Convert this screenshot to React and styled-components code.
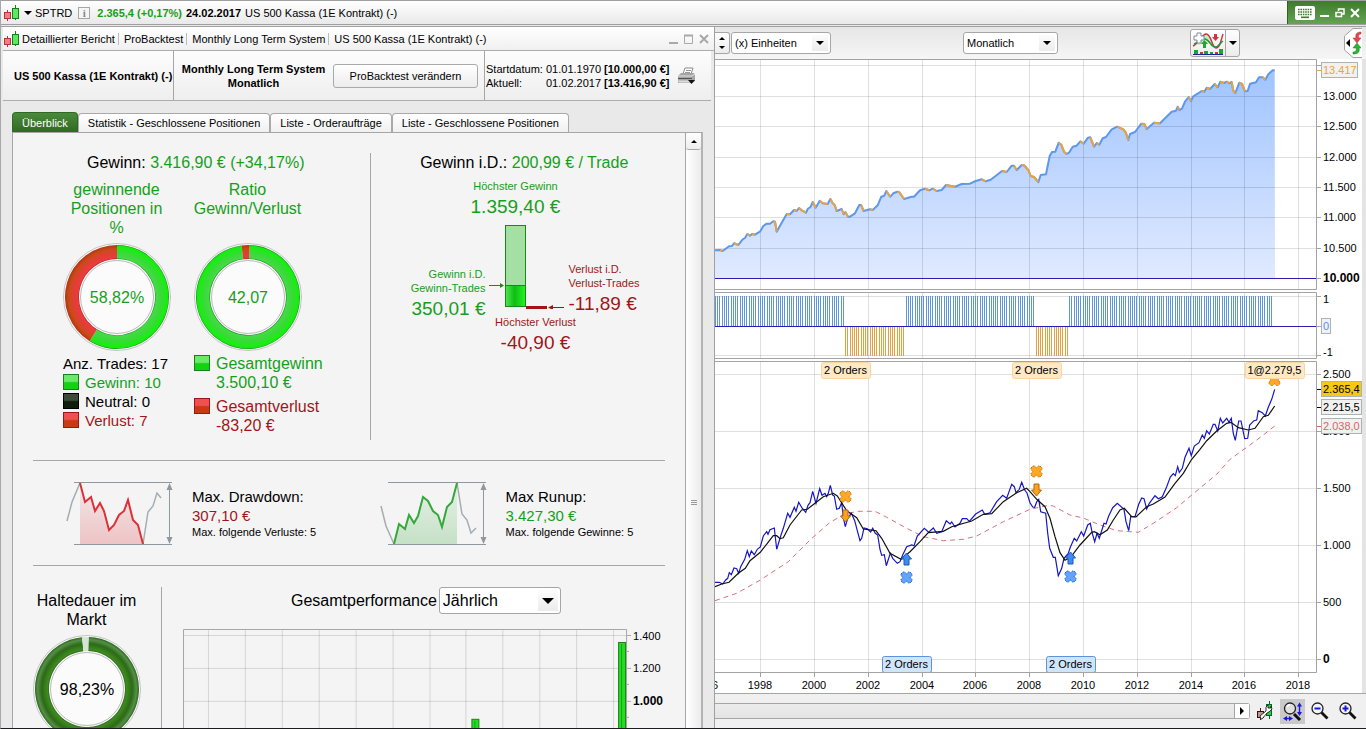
import React from 'react';
import styled, { createGlobalStyle } from 'styled-components';

const GREEN = '#15a01b';
const RED = '#a3141a';

const toPoints = (str) => str.trim().split(/\s+/).map((p) => p.split(',').map(Number));

const equity = `715,250.3 720,250 722.7,251 729,246.3 732,246 734,243.3 738.3,245 742.7,239.3 745,238 747.3,234 750,235.7 752,234
755,234.7 760.3,231.3 763.3,226 766.7,223.7 770,223.7 773.3,221.3 775,221.7 776.7,231.7 781.7,222.7 786.7,214 790,214.3 794,210
796.7,211 799,208 801.7,210.3 806,212.7 807.7,209 810.7,206.7 812.7,202 815.7,207.7 819.7,200.7 822.7,203.3 827.7,204 830.3,199
832.7,203.3 834.7,205 836.7,211 841.7,209 843.7,214.3 845.3,212 848,216.7 850,216.7 855,213.3 859.3,205 861,205 863.7,211
870,209.3 872.7,210 877.7,205.3 881.3,196.7 884.3,195.7 886.3,191 890.3,196.7 893.3,193.3 897.3,191.7 899.3,192.3 904,199
911.7,196.7 914,196.7 920,190.3 925,188.7 929.3,190.3 932.7,188.7 936.7,191 941.7,190 946,185 955,186.7 961.7,184 970,183.7
975.7,181 981.7,179.3 985.7,181.3 990.7,179.7 1002,171 1006.7,172 1011.7,165.7 1014,165.7 1016.7,170 1021.7,165 1024,165.3
1028.3,170 1030.7,176 1034,177 1038.3,182.2 1040.7,175 1046,174.3 1049.7,156 1052,152 1055.3,151.7 1058.7,142.7 1061.3,144.7
1064,151.7 1066.7,154 1069,152.7 1072.7,146.7 1076.7,145.7 1080.3,141.3 1083.7,143.7 1088,137.7 1090.3,137.3 1094,146.7
1096.7,143 1099.3,144.7 1102.7,138.3 1106,137 1111.7,129.3 1117.3,126.7 1123.3,129.3 1125.7,132.3 1128.3,140 1130,134 1135,132
1141.3,123.7 1144.3,124 1146.7,129 1154,122.7 1160,123.3 1171.7,111.7 1176,110.7 1177.7,106.7 1179.3,110 1182,108.7 1185,101.7
1188.7,97 1191,101 1193.3,96.3 1201.7,91 1204.3,91.7 1206.7,87.7 1210,89 1214.7,84 1217.7,87.3 1220.3,81.7 1224,83 1226.7,81.7
1229.3,83.3 1231.7,82 1233.3,90.7 1235.3,93 1239.3,82.7 1242,84 1245,91.3 1247.7,91 1250,83.7 1256,82.3 1259,77.3 1262.7,77.3
1265.3,79.7 1268.3,74.3 1272.7,70.3 1274.7,70.3`;

const price = `715,582.3 719.3,582.3 722.7,584 725.7,580 727.7,578.3 729.3,572.7 731.3,574.7 734,568 736.7,568.7 738.7,573.3
740.7,566.7 744.7,559.3 747.3,550.7 749.3,556.7 751.3,551 754.3,554.7 757.3,549.3 760.3,547 763.3,536 766.7,531.7 768,534.3
770,529.7 774.3,528 776.7,549.3 780.7,536 783.3,528.3 787.7,513.3 790,517.3 794.3,507.3 796,511.3 798.7,502.3 802,508 805.7,512.3
808,505.3 810,502.7 812.7,491.3 816,503.3 819.7,488.7 822,495.3 825,493.3 826.7,496.7 828.3,493.3 830.3,485.3 832.7,495 834.3,496
836.7,509.3 839.3,508.3 841.7,502.7 843.3,517.3 845.3,526.7 847.7,518.3 851.3,513.3 854.7,520.7 857.3,530.7 860,540.7 861.7,538.3
864,528 867.3,528.7 870.7,532 872.7,528.3 875.3,533.3 877.7,535 880,549.3 881.7,555.3 884.3,554.7 886.3,565.7 890.3,553.3
892.7,558.3 897.3,563.3 900,561.7 902.7,555 906.7,546.7 911.7,545 914,545.7 917.3,536 924.3,528.3 928.7,532.3 933.3,528
936.7,533.3 941.7,531.7 946.3,520.7 950,524 951.7,522 955,527 960,523.3 962.3,518.7 966.7,518.7 969.3,521.3 975.7,514 982.3,510
984.7,514.3 990,512.7 996.7,501.7 1002.7,495.3 1006.7,498.3 1011.7,484.3 1014.3,486.7 1016,492.7 1019.3,489.3 1021.7,482.3
1024.7,490 1027,493 1030,502.7 1032.7,507 1034.7,507.3 1036.7,501.7 1038.7,499.3 1040.7,511.7 1045.7,513.3 1047.7,533.3
1049.7,548.3 1053.3,557.3 1055.3,557.3 1058.3,575.7 1061.7,568.3 1064,558.3 1068.3,553.3 1070.3,547.3 1074.3,538.3 1076.7,541
1081.3,531.7 1083.7,536 1087.7,525 1090.3,523.3 1092.3,533.3 1094.7,541.7 1097,533.3 1099.3,538.3 1104,523.3 1106,524 1108.7,516
1112.7,507.7 1117.3,503.3 1124,509.3 1126,521.7 1128.7,530.7 1130.7,516.7 1135,516.7 1138.7,504.3 1141.7,498 1144,498.7
1146.7,509 1149.3,503.3 1155,495.7 1158.3,498.7 1162.3,496.7 1166.7,486.7 1170.3,477 1173.3,473.7 1175.3,475.7 1177.7,466.7
1179.3,472.3 1182.3,468.3 1185,457.3 1189,448.3 1191.3,455.7 1194.3,446 1199,442.7 1202.3,435 1204.3,438.3 1206.7,430.7
1209.3,434 1213.3,424.3 1215,424.3 1217.7,431 1220.3,418.3 1222.7,423 1226.7,418.3 1229,422.3 1231.3,418.3 1233.3,433.3
1235.3,440.3 1238.7,421 1241,421 1244.7,438.7 1247.7,438.3 1249.7,425 1254,420.7 1256.7,420 1258.3,410.7 1262.3,412.7
1265.3,416 1268.3,407.3 1271.7,399.3 1274.7,389.3`;

const fastAverage = `715,586.7 721.7,584 729,582.3 738.3,573.3 745.3,568.3 750,560.7 760.3,552.3 767.3,543.3 773.3,535.7 776.7,535.7
780,538.7 783.3,537.7 790,525 801.7,510 807.3,509.3 815,503.3 823.3,496.7 833.3,493.3 837.3,496 846.7,510.7 856.7,517.7
863.3,529 876,530.7 881.7,538.3 890,553.3 901,559.3 910,551.7 920,541.7 928.3,532.7 943.3,531.3 951.7,526.7 971.7,521
983.3,514.3 991.7,513.7 1003.3,501.7 1016.7,492.7 1026.7,488.3 1030,491.7 1036.7,499.3 1045,506.7 1050,518.3 1055,536.7
1060,552.7 1065,560.3 1070.7,557.3 1080,545 1091.7,532.3 1094.3,531.7 1100,534.7 1107.3,530 1113.3,520 1120,510 1124.3,508.3
1131.7,516.7 1136,517 1146.7,506.7 1153.3,504 1165,497 1175,483.3 1183.3,473.3 1191.7,459.3 1200,449.3 1206.7,440.7
1216.7,431 1226.7,423.3 1231,422.3 1238.3,427.7 1248.3,430 1255,428.3 1263.3,416.7 1268.3,415.3 1274.7,406`;

const slowAverage = `715,600.7 736.7,593.3 760.3,580 788.3,561.7 810,540 830,522.3 843.3,515 856.7,511.3 875,511.3 886.7,517.3
906.7,528.3 923.3,536.7 943.3,540.7 963.3,539.3 976.7,536 1003.3,521.7 1030,509.3 1048.3,505.3 1053.3,506 1070,515
1083.3,518 1100,525 1116.7,530.7 1138.3,532.3 1153.3,523.3 1176.7,507.7 1191.7,495 1216.7,474.3 1230,459.3 1250,445
1263.3,435 1274.7,426`;

const years = [
  [760, 1998], [814, 2000], [868, 2002], [922, 2004], [975, 2006], [1029, 2008],
  [1083, 2010], [1137, 2012], [1191, 2014], [1244, 2016], [1298, 2018]
];

/* ---------- page ---------- */

const GlobalStyle = createGlobalStyle`
  * { box-sizing: border-box; }
  body {
    margin: 0;
    background: #e9e9e9;
    color: #000;
    font-family: "Liberation Sans", Arial, sans-serif;
    font-size: 11px;
    line-height: 14px;
  }
  button, select {
    font: inherit;
    color: inherit;
  }
  svg { display: block; }
`;

const Page = styled.div`
  display: flex;
  flex-direction: column;
  height: 100vh;
  overflow: hidden;
  border-left: 1px solid #a8a8a8;
  border-bottom: 1px solid #1c1c20;
`;

const TitleBar = styled.header`
  display: flex;
  align-items: center;
  height: 25px;
  flex: none;
  padding-left: 3px;
  border-top: 1px solid #a0a0a0;
  border-bottom: 1px solid #a0a0a0;
  background: linear-gradient(#fff, #e9e9e9);
  white-space: nowrap;
`;

const SymbolMenu = styled.button`
  display: flex;
  align-items: center;
  gap: 3px;
  padding: 0;
  border: 0;
  background: none;
`;

const InfoButton = styled.button`
  width: 12px;
  height: 12px;
  margin: 0 7px 0 6px;
  padding: 0;
  border: 1px solid #a6a6a6;
  background: #f6f6f6;
  color: #888;
  font-family: "Liberation Serif", serif;
  font-weight: bold;
  line-height: 10px;
`;

const Quote = styled.strong`
  margin-right: 4px;
  color: ${(props) => props.$color || '#000'};
`;

const WindowControls = styled.div`
  display: flex;
  align-items: center;
  gap: 5px;
  align-self: stretch;
  width: 79px;
  margin-left: auto;
  padding-left: 7px;
  border-left: 1px solid #2f6420;
  background: linear-gradient(#3d7c2d, #63a352);
`;

const IconButton = styled.button`
  display: flex;
  flex: none;
  align-items: center;
  justify-content: center;
  width: ${(props) => props.$width || 12}px;
  height: ${(props) => props.$height || 16}px;
  padding: 0;
  border: 0;
  background: ${(props) => (props.$pressed ? '#c9c9c9' : 'none')};
`;

const Workspace = styled.main`
  display: grid;
  grid-template-columns: minmax(0, 714fr) minmax(0, 651fr);
  flex: 1;
  min-height: 0;
  margin-top: 1px;
  border-top: 1px solid #a0a0a0;
`;

/* ---------- report window ---------- */

const ReportWindow = styled.section`
  display: flex;
  flex-direction: column;
  min-width: 0;
  min-height: 0;
  padding-left: 2px;
  border-right: 1px solid #a0a0a0;
  background: #e9e9e9;
`;

const ReportTitle = styled.div`
  display: flex;
  align-items: center;
  height: 24px;
  flex: none;
  padding: 0 4px 0 1px;
  border-bottom: 1px solid #adadad;
  background: linear-gradient(#fff, #f0f0f0);
  white-space: nowrap;
`;

const Crumb = styled.span`
  margin-left: ${(props) => (props.$first ? 1 : 5)}px;
  padding-right: ${(props) => (props.$last ? 0 : 3)}px;
  border-right: ${(props) => (props.$last ? 'none' : '1px solid #bbb')};
  line-height: 12px;
`;

const MiniControls = styled.div`
  display: flex;
  gap: 3px;
  margin-left: auto;
`;

const Summary = styled.div`
  display: grid;
  grid-template-columns: minmax(0, 171fr) minmax(0, 311fr) minmax(0, 226fr);
  height: 50px;
  flex: none;
  margin-right: 3px;
  border-bottom: 1px solid #adadad;
  background: linear-gradient(#fdfdfd, #eee);
  white-space: nowrap;
`;

const SummaryCell = styled.div`
  display: flex;
  align-items: center;
  padding-left: ${(props) => props.$pad}px;
  border-right: ${(props) => (props.$last ? 'none' : '1px solid #a6a6a6')};
  font-weight: ${(props) => (props.$bold ? 'bold' : 'normal')};
`;

const SystemName = styled.div`
  flex: 1;
  font-weight: bold;
  text-align: center;
`;

const ChangeButton = styled.button`
  width: 145px;
  height: 24px;
  margin-right: 6px;
  border: 1px solid #a9a9a9;
  border-radius: 3px;
  background: linear-gradient(#fff, #ececec);
`;

const Dates = styled.dl`
  display: grid;
  grid-template-columns: 60px 58px auto;
  margin: 0 8px 0 0;

  dd { margin: 0; }
`;

const Tabs = styled.div`
  display: flex;
  align-items: flex-end;
  height: 31px;
  flex: none;
  padding-left: 9px;
`;

const Tab = styled.button`
  height: ${(props) => (props.$active ? 20 : 19)}px;
  padding: 0 9px;
  border: 1px solid ${(props) => (props.$active ? '#2f6a22' : '#a9a9a9')};
  border-bottom: 0;
  border-radius: 4px 4px 0 0;
  background: ${(props) => (props.$active ? 'linear-gradient(#4b8a3b, #2f6a22)' : 'linear-gradient(#fff, #f0f0f0)')};
  color: ${(props) => (props.$active ? '#fff' : '#000')};
  white-space: nowrap;
`;

const ReportBody = styled.div`
  display: flex;
  flex: 1;
  min-height: 0;
  margin: 0 11px 0 9px;
  border: 1px solid #a6a6a6;
  border-bottom: 0;
  border-right: 2px solid #b3b3b3;
  background: #f4f4f4;
  overflow: hidden;
`;

const ReportContent = styled.div`
  flex: 1;
  min-width: 0;
  padding: 0 20px;
  font-size: 16px;
  line-height: 19px;
`;

const Scroller = styled.div`
  display: flex;
  flex-direction: column;
  width: 16px;
  flex: none;
  border-left: 1px solid #a6a6a6;
`;

const ScrollUp = styled.button`
  height: 17px;
  padding: 0;
  border: 0;
  border-bottom: 1px solid #a6a6a6;
  border-radius: 3px;
  background: linear-gradient(#fff, #eee);
  display: flex;
  align-items: center;
  justify-content: center;
`;

const ScrollThumb = styled.div`
  display: flex;
  align-items: center;
  justify-content: center;
  flex: 1;
  padding-top: 128px;
  background: linear-gradient(90deg, #fff, #ececec);
`;

const Overview = styled.section`
  display: grid;
  grid-template-columns: minmax(0, 339fr) minmax(0, 294fr);
  padding: 20px 0;
  border-bottom: 1px solid #a6a6a6;
`;

const Performance = styled.div`
  height: 287px;
  border-right: 1px solid #a6a6a6;
`;

const Headline = styled.h2`
  margin: 0;
  font-size: 16px;
  font-weight: normal;
  text-align: center;
  padding-left: ${(props) => props.$shift || 0}px;
  padding-right: ${(props) => props.$trim || 0}px;
`;

const Value = styled.span`
  color: ${(props) => props.$color};
`;

const Rings = styled.div`
  display: grid;
  grid-template-columns: 131px 131px;
  margin: 8px 0 0 18px;
`;

const RingColumn = styled.div`
  display: flex;
  flex-direction: column;
  align-items: center;
`;

const RingTitle = styled.h3`
  width: 108px;
  height: 57px;
  margin: 0 0 6px;
  color: ${(props) => props.$color || '#000'};
  font-size: 16px;
  font-weight: normal;
  text-align: center;
`;

const Legend = styled.ul`
  align-self: stretch;
  margin: 3px 0 0 12px;
  padding: 0;
  list-style: none;
  font-size: ${(props) => props.$size || 16}px;
  white-space: nowrap;
`;

const LegendItem = styled.li`
  display: flex;
  gap: 6px;
  margin-bottom: ${(props) => props.$gap || 0}px;
  color: ${(props) => props.$color || '#000'};
`;

const swatches = {
  green: ['#6be96b', '#12d312', '#1b7d1b'],
  black: ['#3c4a38', '#101f0c', '#000'],
  red: ['#f05050', '#c83a10', '#a3141a']
};

const Swatch = styled.i`
  width: 16px;
  height: 16px;
  flex: none;
  margin-top: 1px;
  border: 1px solid ${(props) => swatches[props.$tone][2]};
  background: linear-gradient(${(props) => swatches[props.$tone][0]} 45%, ${(props) => swatches[props.$tone][1]} 55%);
`;

const TradeFigures = styled.div`
  display: grid;
  grid-template-columns: 116px 78px auto;
  margin-top: 7px;
  white-space: nowrap;
`;

const Figure = styled.div`
  display: flex;
  flex-direction: column;
  align-items: ${(props) => props.$align || 'center'};
  width: ${(props) => (props.$width ? props.$width + 'px' : 'auto')};
  padding-top: ${(props) => props.$top || 0}px;
  padding-right: ${(props) => props.$right || 0}px;
  padding-bottom: ${(props) => props.$bottom || 0}px;
  padding-left: ${(props) => props.$left || 0}px;
  margin-left: ${(props) => (props.$push ? 'auto' : 0)};
  color: ${(props) => props.$color};
  font-size: 11px;
  line-height: 14px;
  text-align: right;

  strong {
    font-size: 19px;
    font-weight: normal;
    line-height: 28px;
  }
`;

const Extremes = styled.section`
  display: grid;
  grid-template-columns: 1fr 1fr;
  height: 105px;
  padding: 0 5px 0 0;
  border-bottom: 1px solid #a6a6a6;
`;

const Extreme = styled.div`
  display: flex;
  align-items: center;
  gap: 18px;
  padding: 2px 0 0 33px;
  font-size: 15px;
  white-space: nowrap;

  p { margin: 0; }
  small {
    display: block;
    padding-bottom: 2px;
    font-size: 11px;
    line-height: 14px;
  }
`;

const Yearly = styled.section`
  display: flex;
  padding-top: 21px;
`;

const HoldTime = styled.div`
  display: flex;
  flex-direction: column;
  align-items: center;
  width: 129px;
  flex: none;
  padding: 4px 21px 100px 0;
  border-right: 1px solid #a6a6a6;

  h3 { height: 38px; }
`;

const YearlyChart = styled.div`
  flex: 1;
  min-width: 0;
  padding-left: 21px;
`;

const ChartHead = styled.div`
  display: flex;
  align-items: center;
  gap: 2px;
  margin: 0 0 15px 108px;
`;

const SelectBox = styled.div`
  position: relative;
  flex: none;
  width: ${(props) => props.$width}px;
  height: ${(props) => props.$height}px;

  select {
    appearance: none;
    width: 100%;
    height: 100%;
    padding: 0 0 0 3px;
    border: 1px solid #a6a6a6;
    border-radius: 3px;
    background: #fff;
  }
`;

const SelectArrow = styled.span`
  position: absolute;
  top: 3px;
  right: 3px;
  bottom: 3px;
  display: flex;
  align-items: center;
  justify-content: center;
  width: ${(props) => props.$width || 16}px;
  background: linear-gradient(#fcfcfc, #ececec);
  pointer-events: none;
`;

/* ---------- chart side ---------- */

const ChartPane = styled.section`
  display: flex;
  flex-direction: column;
  min-width: 0;
  min-height: 0;
`;

const ChartToolbar = styled.div`
  display: flex;
  align-items: center;
  height: 32px;
  flex: none;
  padding-right: 4px;
  background: linear-gradient(#e6e6e6, #f6f6f6);
`;

const Gap = styled.div`
  flex: ${(props) => props.$grow};
`;

const Spinner = styled.div`
  display: flex;
  flex-direction: column;
  align-items: center;
  justify-content: center;
  width: 15px;
  height: 22px;
  margin-right: 1px;
  border: 1px solid #a6a6a6;
  border-left: 0;
  border-radius: 0 3px 3px 0;
  background: linear-gradient(#fff, #ececec);
`;

const IndicatorButtons = styled.div`
  display: flex;
  width: 50px;
  height: 28px;
  border: 1px solid #a6a6a6;
  border-radius: 3px;
  background: linear-gradient(#fff, #ececec);

  button + button {
    border-left: 1px solid #a6a6a6;
  }
`;

const SideTab = styled.button`
  width: 18px;
  height: 30px;
  padding: 0;
  border: 0;
  background: none;
`;

const Charts = styled.div`
  flex: 1;
  min-height: 0;
  border-right: 4px solid #e4e4e4;
  background: #fff;
  overflow: hidden;

  svg {
    width: 100%;
    height: auto;
  }
  text {
    font-size: 11px;
  }
`;

const BottomBar = styled.div`
  display: flex;
  align-items: center;
  height: 35px;
  flex: none;
  padding-right: 9px;
  border-top: 1px solid #a6a6a6;
  background: #f0f0f0;
`;

const TimeScroll = styled.div`
  display: flex;
  justify-content: flex-end;
  flex: 1;
  height: 16px;
  margin-right: 5px;
  border: 1px solid #a6a6a6;
  border-left: 0;
  border-radius: 0 3px 3px 0;
  background: linear-gradient(#ececec, #e4e4e4);
`;

const TimeScrollButton = styled.button`
  display: flex;
  align-items: center;
  justify-content: center;
  width: 15px;
  padding: 0;
  border: 0;
  border-left: 1px solid #a6a6a6;
  background: #fff;
`;

/* ---------- drawings ---------- */

function Triangle({ size = 8, dir = 'down' }) {
  const shapes = { down: '0,0 8,0 4,4', up: '0,4 8,4 4,0', right: '0,0 4,4 0,8' };
  const tall = dir === 'right';
  return (
    <svg
      width={tall ? size / 2 : size}
      height={tall ? size : size / 2}
      viewBox={tall ? '0 0 4 8' : '0 0 8 4'}
    >
      <polygon points={shapes[dir]} />
    </svg>
  );
}

function Candles() {
  return (
    <svg width="17" height="18" viewBox="0 0 17 18">
      <path d="M3.5 6v11" stroke="#b2343c" />
      <rect x="0.5" y="8.5" width="6" height="6" fill="#ee7f83" stroke="#b2343c" />
      <path d="M11.5 1v15" stroke="#14801c" />
      <rect x="8.5" y="4.5" width="6" height="10" fill="#5ce860" stroke="#14801c" />
    </svg>
  );
}

function Keyboard() {
  return (
    <svg width="20" height="14" viewBox="0 0 20 14">
      <rect width="20" height="14" rx="2" fill="#fff" />
      <path d="M3 3.5h14M3 6h14M3 8.5h14" stroke="#3c7a2c" strokeWidth="1.4" strokeDasharray="1.6 0.8" />
      <path d="M6 11.3h8" stroke="#3c7a2c" strokeWidth="1.6" />
    </svg>
  );
}

function Printer() {
  return (
    <svg width="20" height="18" viewBox="0 0 20 18">
      <path d="M6 7L8 1h8l-2 6z" fill="#fff" stroke="#8b8b8b" />
      <path d="M9 3.5h5M8 5.5h5" stroke="#999" />
      <path d="M1 9l3-3h13l1 2v6l-3 2H1z" fill="#a5a5a5" />
      <path d="M1 9h14l3-2" stroke="#e2e2e2" fill="none" />
      <path d="M1 11.5h14" stroke="#555" />
      <path d="M1 13.5h13v2H2z" fill="#ddd" />
      <path d="M11 13h7l-3.5 4z" fill="#111" />
    </svg>
  );
}

function arc(cx, cy, r, from, to) {
  const at = (share) => {
    const a = share * Math.PI * 2 - Math.PI / 2;
    return `${cx + r * Math.cos(a)} ${cy + r * Math.sin(a)}`;
  };
  return `M${at(from)}A${r} ${r} 0 ${to - from > 0.5 ? 1 : 0} 1 ${at(to)}`;
}

function Ring({ id, label, color, parts, stops }) {
  return (
    <svg width="108" height="108" viewBox="0 0 108 108">
      <defs>
        {stops.map((list, i) => (
          <radialGradient key={i} id={`${id}${i}`} gradientUnits="userSpaceOnUse" cx="54" cy="54" r="52">
            {list.map(([at, c]) => <stop key={at} offset={at} stopColor={c} />)}
          </radialGradient>
        ))}
      </defs>
      <circle cx="54" cy="54" r="53.5" fill="#fafafa" stroke="#b4b4b4" strokeWidth="0.8" />
      {parts.map(([from, to, fill]) => (
        <path key={from} d={arc(54, 54, 45, from, to)} fill="none" stroke={fill < 0 ? '#d5e5d5' : `url(#${id}${fill})`} strokeWidth="14" />
      ))}
      <circle cx="54" cy="54" r="36.5" fill="#fbfbfb" stroke="#aaa" strokeWidth="0.8" />
      <text x="54" y="60" textAnchor="middle" fontSize="16" fill={color}>{label}</text>
    </svg>
  );
}

const greenStops = [[0.73, '#128a18'], [0.75, '#44dc44'], [0.84, '#3cd83c'], [0.95, '#18ee12'], [0.98, '#18e812'], [1, '#128a18']];
const redStops = [[0.73, '#b02020'], [0.75, '#ea3c3c'], [0.83, '#e43c38'], [0.92, '#c94c18'], [1, '#b83414']];
const holdStops = [[0.73, '#2b6a1c'], [0.76, '#3f8a22'], [0.8, '#38801a'], [0.87, '#2c6a18'], [0.95, '#568f48'], [1, '#2b6a1c']];

function TradeBars() {
  return (
    <svg width="78" height="84" viewBox="0 0 78 84">
      <defs>
        <linearGradient id="gain">
          <stop offset="0" stopColor="#4fe74f" />
          <stop offset="0.45" stopColor="#0fbd14" />
          <stop offset="1" stopColor="#22f51f" />
        </linearGradient>
      </defs>
      <rect x="18.5" y="0.5" width="20" height="81" fill="#a4dfa4" stroke="#18881c" />
      <rect x="18.5" y="60.5" width="20" height="21" fill="url(#gain)" stroke="#18881c" />
      <path d="M2 60.5h12" stroke="#18881c" />
      <path d="M13 58l4 2.5-4 2.5z" fill="#18881c" />
      <path d="M39 82.5h21" stroke={RED} strokeWidth="3" />
      <path d="M65 82.5h12" stroke={RED} />
      <path d="M66 80l-5 2.5 5 2.5z" fill={RED} />
    </svg>
  );
}

function ExtremeSketch({ id, color, area, before, after }) {
  return (
    <svg width="108" height="64" viewBox="0 0 108 64">
      <defs>
        <linearGradient id={id} x1="0" y1="0" x2="0" y2="1">
          <stop offset="0" stopColor={color} stopOpacity="0.06" />
          <stop offset="1" stopColor={color} stopOpacity="0.25" />
        </linearGradient>
      </defs>
      <polygon points={area.fill} fill={`url(#${id})`} />
      <polyline points={before} fill="none" stroke="#a5adb2" strokeWidth="1.5" />
      <polyline points={after} fill="none" stroke="#a5adb2" strokeWidth="1.5" />
      <path d="M8 0.5h98M8 62.5h98M103.5 3v57" stroke="#8f989e" />
      <path d="M103.5 1l3 7h-6zM103.5 62l3-7h-6z" fill="#8f989e" />
      <polyline points={area.line} fill="none" stroke={color} strokeWidth="2" />
    </svg>
  );
}

const drawdownLine = '14,1 19,20 25,15 29,29 34,21 38,29 43,48 48,43 53,33 58,29 62,18 67,38 72,43 77,62';
const runupLine = '14,62 19,42 25,47 29,33 34,41 38,34 43,15 48,19 53,29 58,33 62,45 67,25 72,20 77,1';

function YearlyBars() {
  const columns = [208, 245, 282, 319, 356, 393, 430, 466, 503, 540, 577, 614];
  return (
    <svg width="100%" viewBox="183 629 483 160">
      <g stroke="#000" strokeOpacity="0.13">
        {columns.map((x) => <path key={x} d={`M${x + 0.5} 629v160`} />)}
        {[635, 668, 701].map((y) => <path key={y} d={`M183 ${y + 0.5}h444`} />)}
      </g>
      <path d="M183.5 789V629.5H627.5V789" fill="none" stroke="#a6a6a6" />
      {[635, 668, 701].map((y) => <path key={y} d={`M628 ${y + 0.5}h4M628 ${y + 16.5}h2`} stroke="#a6a6a6" />)}
      {[[619, 642], [472, 719]].map(([x, y]) => (
        <g key={x}>
          <rect x={x + 0.5} y={y + 0.5} width="7" height="160" fill="#22dd20" stroke="#1d7f1d" />
          <path d={`M${x + 3.5} ${y + 2}v150`} stroke="#12a812" />
        </g>
      ))}
      <g fontSize="11">
        <text x="634" y="640">1.400</text>
        <text x="634" y="672">1.200</text>
        <text x="634" y="705" fontSize="12" fontWeight="bold">1.000</text>
      </g>
    </svg>
  );
}

function Grid({ top, bottom, rows }) {
  return (
    <g stroke="#000" strokeOpacity="0.12">
      {years.map(([x]) => <path key={x} d={`M${x + 0.5} ${top}V${bottom}`} />)}
      {rows.map((y) => <path key={y} d={`M715 ${y + 0.5}H1316`} />)}
    </g>
  );
}

function Frame({ top, bottom }) {
  return <path d={`M715 ${top + 0.5}H1316.5V${bottom + 0.5}H715`} fill="none" stroke="#a3a3a3" />;
}

function AxisTag({ y, width = 40, fill = '#f1f1f1', color = '#000', label }) {
  return (
    <g>
      <path d={`M1317 ${y + 8.5}h4`} stroke={color} />
      <rect x="1321.5" y={y + 0.5} width={width} height="15" fill={fill} stroke="#adb3b3" />
      <text x="1323" y={y + 12} fill={color}>{label}</text>
    </g>
  );
}

function EquityChart() {
  const pts = toPoints(equity);
  // stretches where the equity falls are drawn over in orange
  const losses = pts
    .slice(1)
    .map((p, i) => [pts[i], p])
    .filter(([a, b]) => b[1] > a[1])
    .map(([a, b]) => `M${a}L${b}`)
    .join('');
  const labels = [['13.000', 96], ['12.500', 126], ['12.000', 157], ['11.500', 187], ['11.000', 217], ['10.500', 248]];
  return (
    <svg viewBox="715 59 647 231" role="img" aria-label="Equity">
      <defs>
        <linearGradient id="equity" x1="0" y1="0" x2="0" y2="1">
          <stop offset="0" stopColor="#a0c4ff" />
          <stop offset="1" stopColor="#e0eaff" />
        </linearGradient>
      </defs>
      <polygon points={`${equity} 1275,278 715,278`} fill="url(#equity)" />
      <Grid top={60} bottom={289} rows={[65, 96, 126, 157, 187, 217, 248]} />
      <polyline points={equity} fill="none" stroke="#5f97ee" strokeWidth="2" strokeLinejoin="round" />
      <path d={losses} stroke="#eda23a" strokeWidth="2" />
      <path d="M715 278.5H1316" stroke="#2a1fb0" />
      <Frame top={59} bottom={289} />
      <path d="M1317 65.5h4M1317 278.5h4" stroke="#a3a3a3" />
      {labels.map(([text, y]) => (
        <g key={text}>
          <path d={`M1317 ${y + 0.5}h4`} stroke="#a3a3a3" />
          <text x="1323" y={y + 4}>{text}</text>
        </g>
      ))}
      <text x="1323" y="282" style={{ fontSize: 12, fontWeight: 'bold' }}>10.000</text>
      <AxisTag y={62} width={36} color="#eda23a" label="13.417" />
    </svg>
  );
}

function PositionChart() {
  const bars = [];
  for (let i = 0; i < 249; i++) {
    const x = Math.round(1271 - i * 2.242);
    if (x < 715) break;
    const short = (x > 844 && x < 906) || (x > 1035 && x < 1069);
    bars.push(<rect key={x} x={x} y={short ? 327 : 296} width="1" height={short ? 29 : 30} fill={short ? '#e3a03c' : '#5c95da'} />);
  }
  return (
    <svg viewBox="715 290 647 70" role="img" aria-label="Position">
      <Grid top={292} bottom={358} rows={[296, 355]} />
      {bars}
      <path d="M715 326.5H1316" stroke="#2a1fb0" />
      <Frame top={292} bottom={358} />
      <path d="M1317 296.5h4M1317 326.5h4M1317 355.5h4" stroke="#a3a3a3" />
      <text x="1323" y="303">1</text>
      <text x="1323" y="356">-1</text>
      <rect x="1321.5" y="318.5" width="9" height="15" fill="#eef2f6" stroke="#adb3b3" />
      <text x="1323" y="330" fill="#5f8fdc">0</text>
    </svg>
  );
}

function Cross({ x, y, sell }) {
  return (
    <path
      transform={`translate(${x} ${y})`}
      d="M-5.5-3.5L-3.5-5.5H-2L0-3.7L2-5.5H3.5L5.5-3.5V-2L3.7 0L5.5 2V3.5L3.5 5.5H2L0 3.7L-2 5.5H-3.5L-5.5 3.5V2L-3.7 0L-5.5-2z"
      fill={sell ? '#ffa824' : '#62a4ff'}
      stroke={sell ? '#b87410' : '#2462c4'}
      strokeDasharray="1.5 0.7"
    />
  );
}

function TradeArrow({ x, y, sell }) {
  return (
    <path
      transform={`translate(${x} ${y}) scale(1 ${sell ? 1 : -1})`}
      d="M-2.5-6h5V0H5L0 6L-5 0h2.5z"
      fill={sell ? '#ffa020' : '#3f8cf0'}
      stroke={sell ? '#b06a08' : '#1c58b4'}
    />
  );
}

function OrderTag({ x, y, width, label, buy }) {
  return (
    <g>
      <rect x={x + 0.5} y={y + 0.5} width={width} height="16" rx="2" fill={buy ? '#cfe5fb' : '#ffe8c4'} stroke={buy ? '#5c94dc' : '#f8d6a4'} />
      <text x={x + width / 2} y={y + 12} textAnchor="middle">{label}</text>
    </g>
  );
}

function PriceChart() {
  const labels = [['2.500', 374], ['2.000', 431], ['1.500', 488], ['1.000', 545], ['500', 602]];
  return (
    <svg viewBox="715 360 647 333" role="img" aria-label="US 500 Kassa">
      <Grid top={362} bottom={672} rows={[374, 431, 488, 545, 602, 659]} />
      <polyline points={slowAverage} fill="none" stroke="#d8707c" strokeDasharray="5 4" />
      <polyline points={price} fill="none" stroke="#1616c4" strokeWidth="1.2" />
      <polyline points={fastAverage} fill="none" stroke="#111" strokeWidth="1.2" />
      <Cross x={845.5} y={496.5} sell />
      <TradeArrow x={845.5} y={516} sell />
      <Cross x={1036.5} y={471.5} sell />
      <TradeArrow x={1036.5} y={490} sell />
      <Cross x={1274.5} y={380} sell />
      <TradeArrow x={906.5} y={559} />
      <Cross x={906.5} y={577.5} />
      <TradeArrow x={1070.5} y={558} />
      <Cross x={1070.5} y={576.5} />
      <OrderTag x={821} y={362} width={49} label="2 Orders" />
      <OrderTag x={1012} y={362} width={49} label="2 Orders" />
      <OrderTag x={1245} y={362} width={59} label="1@2.279,5" />
      <OrderTag x={882} y={656} width={49} label="2 Orders" buy />
      <OrderTag x={1046} y={656} width={49} label="2 Orders" buy />
      <rect x="715" y="673" width="601" height="2" fill="#fff" />
      <Frame top={361} bottom={672} />
      {labels.map(([text, y]) => (
        <g key={text}>
          <path d={`M1317 ${y + 0.5}h4`} stroke="#a3a3a3" />
          <text x="1323" y={y + 4}>{text}</text>
        </g>
      ))}
      <path d="M1317 659.5h4" stroke="#a3a3a3" />
      <text x="1323" y="663" style={{ fontSize: 12, fontWeight: 'bold' }}>0</text>
      <AxisTag y={381} fill="#f6c914" label="2.365,4" />
      <AxisTag y={399} label="2.215,5" />
      <AxisTag y={418} color="#dc6464" label="2.038,0" />
      <text x="712" y="689">6</text>
      {years.map(([x, year]) => (
        <g key={year}>
          <path d={`M${x + 0.5} 673v4`} stroke="#a3a3a3" />
          <text x={x} y="689" textAnchor="middle">{year}</text>
        </g>
      ))}
    </svg>
  );
}

function IndicatorIcon() {
  return (
    <svg width="34" height="26" viewBox="0 0 34 26">
      <path d="M12 6c5-5 9 3 11 10-4-1-8-4-11-10zM3 14c3-5 6-6 9-8 2 4 0 7-3 9z" fill="#c6eac2" />
      <path d="M2 16C8 13 10 5 15 4S21 18 25 18s5-8 7-14" fill="none" stroke="#c8323c" strokeWidth="1.4" />
      <path d="M3 14c5-2 6-6 11-5s6 8 10 8 5-4 8-6" fill="none" stroke="#1f9a32" strokeWidth="1.4" />
      <path d="M6 3h4v3h3v4h-3v3H6v-3H3V6h3z" fill="#fff" stroke="#7c8a99" />
      <path d="M23 4h3v3h2l-3.500 4L21 7h2z" fill="#d8323c" />
      <path d="M12 18v-4h-2l3.500-4 3.500 4h-2v4z" fill="#1fa82c" />
      <path d="M2 24.500h30" stroke="#20209a" />
      <path d="M3 20h4v4H3zM13 21h4v3h-4zM19 22h3v2h-3zM28 19h4v5h-4z" fill="#18a828" />
      <path d="M9 22h3v2H9zM24 22h3v2h-3z" fill="#c8323c" />
    </svg>
  );
}

function SideTabIcon() {
  return (
    <svg width="18" height="30" viewBox="0 0 18 30">
      <path d="M18 0.500H9L0.500 8v14L9 29.500h9" fill="#fff" stroke="#a3a3a3" />
      <path d="M6 11l-4 4 4 4z" />
      <path d="M17 4c-4 0-6 2-5 6H9l4 5 4-5h-2c-1-3 0-4 2-4z" fill="#e04850" stroke="#b83038" strokeWidth="0.500" />
      <path d="M9 26c5 0 7-2 6-6h2l-4-5-4 5h3c1 3-1 4-3 4z" fill="#28b82c" stroke="#157f1a" strokeWidth="0.500" />
    </svg>
  );
}

function CandleSettingsIcon() {
  return (
    <svg width="16" height="20" viewBox="0 0 16 20">
      <path d="M3.500 7v12" stroke="#612" />
      <rect x="0.500" y="10.500" width="6" height="6" fill="#b98" stroke="#311" />
      <path d="M12.500 0v18" stroke="#063" />
      <rect x="9.500" y="3.500" width="5" height="11" fill="#2ecc40" stroke="#063" />
      <path d="M4 18L3 15l6-5V6l2-2v3h3V5l1 3-3 3-2 1-5 6z" fill="#fff" stroke="#222" strokeWidth="0.900" />
    </svg>
  );
}

function ZoomIcon({ sign, fit }) {
  if (fit) {
    return (
      <svg width="25" height="25" viewBox="0 0 25 25">
        <path d="M14 15l6 6" stroke="#111" strokeWidth="3" />
        <circle cx="10" cy="9.500" r="5.500" fill="#e0e0e0" stroke="#222" strokeWidth="1.300" />
        <path d="M7 8a4 4 0 0 1 3-2.500" fill="none" stroke="#fff" strokeWidth="1.500" />
        <path d="M19.500 6v9M5 19.500h6" stroke="#1818d8" strokeWidth="1.400" />
        <path d="M19.500 3.500l2.500 4h-5zM19.500 17l2.500-4h-5zM3 19.500l4-2.500v5zM13 19.500l-4-2.500v5z" fill="#1818d8" />
      </svg>
    );
  }
  return (
    <svg width="18" height="18" viewBox="0 0 18 18">
      <path d="M10 10l6.500 6.500" stroke="#111" strokeWidth="2.800" />
      <circle cx="6.500" cy="6.500" r="5.500" fill="#f4f4ff" stroke="#222" strokeWidth="1.300" />
      <path d={sign === 'plus' ? 'M3.500 6.500h6M6.500 3.500v6' : 'M3.500 6.500h6'} stroke="#1818d8" strokeWidth="2" />
    </svg>
  );
}

/* ---------- sections ---------- */

function Report() {
  return (
    <ReportWindow>
      <ReportTitle>
        <Candles />
        <Crumb $first>Detaillierter Bericht</Crumb>
        <Crumb>ProBacktest</Crumb>
        <Crumb>Monthly Long Term System</Crumb>
        <Crumb $last>US 500 Kassa (1E Kontrakt) (-)</Crumb>
        <MiniControls>
          <IconButton aria-label="Minimieren">
            <svg width="10" height="10"><path d="M0 9h9" stroke="#a9a9a9" strokeWidth="2" /></svg>
          </IconButton>
          <IconButton aria-label="Maximieren">
            <svg width="10" height="10"><path d="M0.500 1.500h8v8h-8z" fill="none" stroke="#a9a9a9" /><path d="M0 1.500h9" stroke="#a9a9a9" strokeWidth="2" /></svg>
          </IconButton>
          <IconButton aria-label="Bericht schließen">
            <svg width="10" height="10"><path d="M1 1l8 8M9 1l-8 8" stroke="#a9a9a9" strokeWidth="2" /></svg>
          </IconButton>
        </MiniControls>
      </ReportTitle>

      <Summary>
        <SummaryCell $pad={11} $bold>US 500 Kassa (1E Kontrakt) (-)</SummaryCell>
        <SummaryCell $pad={0}>
          <SystemName>Monthly Long Term System<br />Monatlich</SystemName>
          <ChangeButton>ProBacktest verändern</ChangeButton>
        </SummaryCell>
        <SummaryCell $pad={1} $last>
          <Dates>
            <dt>Startdatum:</dt>
            <dd>01.01.1970</dd>
            <dd><b>[10.000,00 €]</b></dd>
            <dt>Aktuell:</dt>
            <dd>01.02.2017</dd>
            <dd><b>[13.416,90 €]</b></dd>
          </Dates>
          <IconButton $width={20} $height={18} aria-label="Drucken"><Printer /></IconButton>
        </SummaryCell>
      </Summary>

      <Tabs role="tablist">
        <Tab role="tab" aria-selected="true" $active>Überblick</Tab>
        <Tab role="tab">Statistik - Geschlossene Positionen</Tab>
        <Tab role="tab">Liste - Orderaufträge</Tab>
        <Tab role="tab">Liste - Geschlossene Positionen</Tab>
      </Tabs>

      <ReportBody>
        <ReportContent>
          <Overview>
            <Performance>
              <Headline $trim={12}>Gewinn: <Value $color={GREEN}>3.416,90 € (+34,17%)</Value></Headline>
              <Rings>
                <RingColumn>
                  <RingTitle $color={GREEN}>gewinnende Positionen in %</RingTitle>
                  <Ring
                    id="wins"
                    label="58,82%"
                    color={GREEN}
                    stops={[greenStops, redStops]}
                    parts={[[0, 0.5882, 0], [0.5882, 1, 1]]}
                  />
                  <Legend $size={15}>
                    <LegendItem>Anz. Trades: 17</LegendItem>
                    <LegendItem $color={GREEN}><Swatch $tone="green" />Gewinn: 10</LegendItem>
                    <LegendItem><Swatch $tone="black" />Neutral: 0</LegendItem>
                    <LegendItem $color={RED}><Swatch $tone="red" />Verlust: 7</LegendItem>
                  </Legend>
                </RingColumn>
                <RingColumn>
                  <RingTitle $color={GREEN}>Ratio Gewinn/Verlust</RingTitle>
                  <Ring
                    id="ratio"
                    label="42,07"
                    color={GREEN}
                    stops={[greenStops, redStops]}
                    parts={[[0.005, 0.98, 0], [0.98, 1.005, 1]]}
                  />
                  <Legend>
                    <LegendItem $color={GREEN} $gap={5}><Swatch $tone="green" /><span>Gesamtgewinn<br />3.500,10 €</span></LegendItem>
                    <LegendItem $color={RED}><Swatch $tone="red" /><span>Gesamtverlust<br />-83,20 €</span></LegendItem>
                  </Legend>
                </RingColumn>
              </Rings>
            </Performance>

            <div>
              <Headline $shift={12}>Gewinn i.D.: <Value $color={GREEN}>200,99 € / Trade</Value></Headline>
              <TradeFigures>
                <Figure $color={GREEN} $align="flex-end" $top={88} $right={2}>
                  <span>Gewinn i.D.</span>
                  <span>Gewinn-Trades</span>
                  <strong>350,01 €</strong>
                </Figure>
                <div>
                  <Figure $color={GREEN} $width={56} $bottom={4}>
                    Höchster Gewinn
                    <strong>1.359,40 €</strong>
                  </Figure>
                  <TradeBars />
                  <Figure $color={RED} $width={60} $push $top={6}>
                    Höchster Verlust
                    <strong>-40,90 €</strong>
                  </Figure>
                </div>
                <Figure $color={RED} $align="flex-start" $top={83} $left={3}>
                  <span>Verlust i.D.</span>
                  <span>Verlust-Trades</span>
                  <strong>-11,89 €</strong>
                </Figure>
              </TradeFigures>
            </div>
          </Overview>

          <Extremes>
            <Extreme>
              <ExtremeSketch
                id="drawdown"
                color="#dc3138"
                before="1,39 6,20 14,1"
                after="77,62 82,30 87,24 91,11 95,16"
                area={{ line: drawdownLine, fill: `${drawdownLine} 14,62` }}
              />
              <div>
                <p>Max. Drawdown:</p>
                <p><Value $color={RED}>307,10 €</Value></p>
                <small>Max. folgende Verluste: 5</small>
              </div>
            </Extreme>
            <Extreme>
              <ExtremeSketch
                id="runup"
                color="#35a83a"
                before="1,24 6,44 14,62"
                after="77,1 82,32 87,38 91,51 96,46"
                area={{ line: runupLine, fill: `${runupLine} 77,62` }}
              />
              <div>
                <p>Max Runup:</p>
                <p><Value $color={GREEN}>3.427,30 €</Value></p>
                <small>Max. folgende Gewinne: 5</small>
              </div>
            </Extreme>
          </Extremes>

          <Yearly>
            <HoldTime>
              <RingTitle>Haltedauer im Markt</RingTitle>
              <Ring
                id="hold"
                label="98,23%"
                color="#000"
                stops={[holdStops]}
                parts={[[0.005, 0.985, 0], [0.985, 1.005, -1]]}
              />
            </HoldTime>
            <YearlyChart>
              <ChartHead>
                <label htmlFor="period">Gesamtperformance</label>
                <SelectBox $width={122} $height={27}>
                  <select id="period"><option>Jährlich</option></select>
                  <SelectArrow $width={20}><Triangle size={12} /></SelectArrow>
                </SelectBox>
              </ChartHead>
              <YearlyBars />
            </YearlyChart>
          </Yearly>
        </ReportContent>

        <Scroller>
          <ScrollUp aria-label="Nach oben"><Triangle dir="up" size={6} /></ScrollUp>
          <ScrollThumb>
            <svg width="6" height="6"><path d="M0 0.500h6M0 2.500h6M0 4.500h6" stroke="#999" /></svg>
          </ScrollThumb>
        </Scroller>
      </ReportBody>
    </ReportWindow>
  );
}

function ChartArea() {
  return (
    <ChartPane>
      <ChartToolbar>
        <Spinner>
          <IconButton $width={10} $height={9} aria-label="Mehr"><Triangle dir="up" size={6} /></IconButton>
          <IconButton $width={10} $height={9} aria-label="Weniger"><Triangle size={6} /></IconButton>
        </Spinner>
        <SelectBox $width={100} $height={22}>
          <select aria-label="Einheiten"><option>(x) Einheiten</option></select>
          <SelectArrow><Triangle /></SelectArrow>
        </SelectBox>
        <Gap $grow={132} />
        <SelectBox $width={95} $height={22}>
          <select aria-label="Zeiteinheit"><option>Monatlich</option></select>
          <SelectArrow><Triangle /></SelectArrow>
        </SelectBox>
        <Gap $grow={132} />
        <IndicatorButtons>
          <IconButton $width={34} $height={26} aria-label="Indikatoren"><IndicatorIcon /></IconButton>
          <IconButton $width={14} $height={26} aria-label="Indikatorliste"><Triangle /></IconButton>
        </IndicatorButtons>
        <Gap $grow={104} />
        <SideTab aria-label="Handel"><SideTabIcon /></SideTab>
      </ChartToolbar>

      <Charts>
        <EquityChart />
        <PositionChart />
        <PriceChart />
      </Charts>

      <BottomBar>
        <TimeScroll>
          <TimeScrollButton aria-label="Vorwärts"><Triangle dir="right" size={8} /></TimeScrollButton>
        </TimeScroll>
        <IconButton $width={20} $height={26} aria-label="Darstellung"><CandleSettingsIcon /></IconButton>
        <Gap $grow="0 0 5px" />
        <IconButton $width={25} $height={25} $pressed aria-label="Automatisch skalieren"><ZoomIcon fit /></IconButton>
        <Gap $grow="0 0 6px" />
        <IconButton $width={18} $height={25} aria-label="Verkleinern"><ZoomIcon sign="minus" /></IconButton>
        <Gap $grow="0 0 10px" />
        <IconButton $width={18} $height={25} aria-label="Vergrößern"><ZoomIcon sign="plus" /></IconButton>
      </BottomBar>
    </ChartPane>
  );
}

export default function App() {
  return (
    <Page>
      <GlobalStyle />
      <TitleBar>
        <SymbolMenu>
          <Candles />
          <Triangle />
          SPTRD
        </SymbolMenu>
        <InfoButton aria-label="Info">i</InfoButton>
        <Quote $color={GREEN}>2.365,4 (+0,17%)</Quote>
        <Quote>24.02.2017</Quote>
        <span>US 500 Kassa (1E Kontrakt) (-)</span>
        <WindowControls>
          <IconButton $width={20} aria-label="Tastatur"><Keyboard /></IconButton>
          <IconButton $width={10} aria-label="Minimieren">
            <svg width="10" height="12"><path d="M0 9h9" stroke="#fff" strokeWidth="2" /></svg>
          </IconButton>
          <IconButton $width={10} aria-label="Wiederherstellen">
            <svg width="10" height="10"><path d="M3.500 3V1H9v5H7M1 4.500h5.500v4H1z" fill="none" stroke="#fff" strokeWidth="1.500" /></svg>
          </IconButton>
          <IconButton $width={10} aria-label="Schließen">
            <svg width="10" height="10"><path d="M1 1l8 8M9 1l-8 8" stroke="#fff" strokeWidth="2" /></svg>
          </IconButton>
        </WindowControls>
      </TitleBar>
      <Workspace>
        <Report />
        <ChartArea />
      </Workspace>
    </Page>
  );
}
